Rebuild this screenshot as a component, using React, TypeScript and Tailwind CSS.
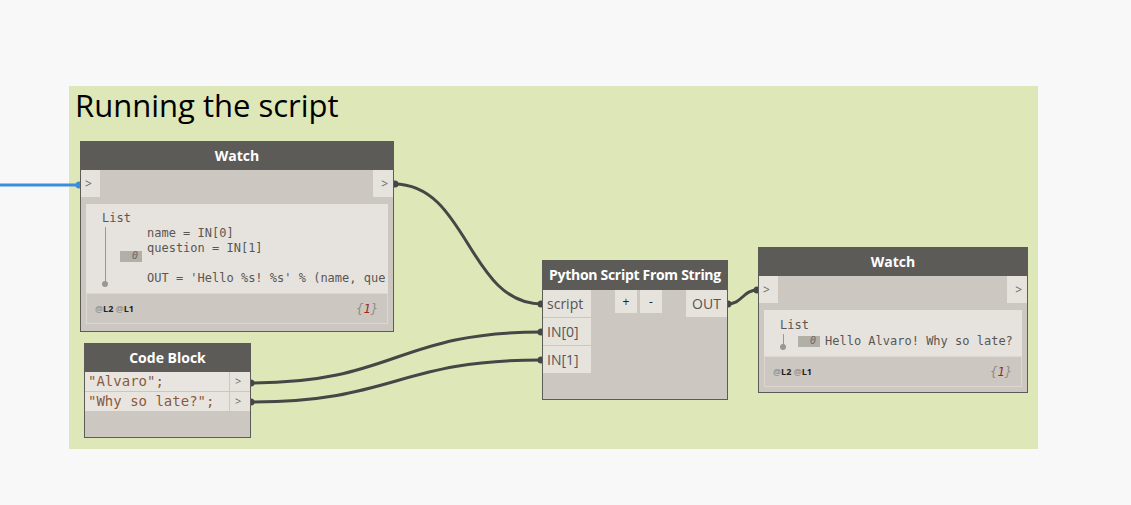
import React from "react";

const ui = { fontFamily: '"Open Sans", "Noto Sans", sans-serif' };
const mono = { fontFamily: '"DejaVu Sans Mono", "Liberation Mono", monospace' };

function wire(x1: number, y1: number, x2: number, y2: number) {
  const d = (x2 - x1) * 0.5;
  return `M ${x1} ${y1} C ${x1 + d} ${y1}, ${x2 - d} ${y2}, ${x2} ${y2}`;
}

function Wires() {
  const wires: [number, number, number, number][] = [
    [394, 184, 542, 304],
    [250, 383, 542, 332],
    [250, 402, 542, 360],
    [727, 304, 758, 290],
  ];
  return (
    <svg className="absolute left-0 top-0" width={1131} height={505} viewBox="0 0 1131 505">
      <line x1={0} y1={185} x2={78} y2={185} stroke="#3c8edb" strokeWidth={3} />
      <circle cx={79} cy={185} r={3.5} fill="#3c8edb" />
      {wires.map(([a, b, c, d], i) => (
        <g key={i}>
          <path d={wire(a, b, c, d)} stroke="#464646" strokeWidth={3} fill="none" />
          <circle cx={a + 1} cy={b} r={3.5} fill="#464646" />
          <circle cx={c - 1} cy={d} r={3.5} fill="#464646" />
        </g>
      ))}
    </svg>
  );
}

function Footer() {
  return (
    <div className="mx-[5px] h-[31px] border border-[#dcd8d1] flex items-center justify-between pl-[8px] pr-[9px]">
      <span className="text-[9px] font-bold text-[#222]" style={ui}>
        <span className="text-[#999]">@</span>L2 <span className="text-[#999]">@</span>L1
      </span>
      <span className="text-[12px] italic text-[#8d8a85]" style={mono}>
        {"{"}
        <span className="text-[#9b2a1d]">1</span>
        {"}"}
      </span>
    </div>
  );
}

function PortRow() {
  return (
    <div className="h-[27px] flex justify-between">
      <div className="w-[19px] bg-[#e6e3dd] flex items-center pl-[4px] text-[12px] text-[#666]" style={ui}>&gt;</div>
      <div className="w-[20px] bg-[#e6e3dd] flex items-center justify-end pr-[5px] text-[12px] text-[#666]" style={ui}>&gt;</div>
    </div>
  );
}

function Header({ title }: { title: string }) {
  return (
    <div className="h-[28px] pb-[2px] bg-[#5d5b58] flex items-center justify-center text-white font-bold text-[14px]" style={ui}>
      {title}
    </div>
  );
}

function TreeLine() {
  return (
    <div className="w-[34px] flex justify-start pl-[16px]">
      <div className="flex flex-col items-center">
        <div className="w-px flex-1 bg-[#9a9792] mt-[1px]" />
        <div className="w-[6px] h-[6px] rounded-full bg-[#9a9792] -mt-[3px] mb-[-1px]" />
      </div>
    </div>
  );
}

function IndexBox() {
  return (
    <div className="w-[22px] h-[11px] bg-[#b2aea8] flex items-center justify-end pr-[4px] text-[10px] italic text-[#6b6864] leading-none" style={mono}>
      0
    </div>
  );
}

function Watch1() {
  return (
    <div className="absolute left-[80px] top-[141px] w-[314px] h-[191px] border border-[#5d5b58] bg-[#ccc8c1] box-border flex flex-col">
      <Header title="Watch" />
      <PortRow />
      <div className="mt-[7px] mx-[5px] h-[89px] bg-[#e6e3de] pt-[7px] overflow-hidden">
        <div className="pl-[16px] h-[15px] leading-[15px] text-[12px] text-[#5a5752]" style={mono}>List</div>
        <div className="flex items-stretch">
          <TreeLine />
          <div className="flex items-center">
            <IndexBox />
          </div>
          <div className="ml-[5px] text-[12px] leading-[15px] text-[#5a5752] whitespace-pre" style={mono}>
            {"name = IN[0]\nquestion = IN[1]\n\nOUT = 'Hello %s! %s' % (name, que"}
          </div>
        </div>
      </div>
      <Footer />
    </div>
  );
}

function Watch2() {
  return (
    <div className="absolute left-[758px] top-[247px] w-[270px] h-[146px] border border-[#5d5b58] bg-[#ccc8c1] box-border flex flex-col">
      <Header title="Watch" />
      <PortRow />
      <div className="mt-[7px] mx-[5px] h-[46px] bg-[#e6e3de] pt-[8px] overflow-hidden">
        <div className="pl-[16px] h-[15px] leading-[15px] text-[12px] text-[#5a5752]" style={mono}>List</div>
        <div className="flex items-stretch">
          <TreeLine />
          <div className="flex items-center">
            <IndexBox />
          </div>
          <div className="ml-[5px] text-[12px] leading-[16px] text-[#5a5752] whitespace-pre" style={mono}>
            Hello Alvaro! Why so late?
          </div>
        </div>
      </div>
      <Footer />
    </div>
  );
}

function Python() {
  const port = "h-[27px] bg-[#e6e3dd] flex items-center text-[14px] text-[#555]";
  return (
    <div className="absolute left-[542px] top-[260px] w-[186px] h-[140px] border border-[#5d5b58] bg-[#ccc8c1] box-border flex flex-col">
      <div className="h-[29px] pb-[2px] bg-[#5d5b58] flex items-center justify-center text-white font-bold text-[14px] whitespace-nowrap tracking-[-0.3px]" style={ui}>
        Python Script From String
      </div>
      <div className="flex">
        <div className="w-[48px] flex flex-col gap-px" style={ui}>
          <div className={port + " pl-[4px]"}>script</div>
          <div className={port + " pl-[4px]"}>IN[0]</div>
          <div className={port + " pl-[4px]"}>IN[1]</div>
        </div>
        <div className="flex gap-[3px] ml-[24px] h-[23px]" style={ui}>
          <div className="w-[22px] bg-[#e6e3dd] flex items-center justify-center text-[12px] text-[#222]">+</div>
          <div className="w-[22px] bg-[#e6e3dd] flex items-center justify-center text-[12px] text-[#222]">-</div>
        </div>
        <div className="flex-1" />
        <div className={port + " w-[41px] justify-center"} style={ui}>OUT</div>
      </div>
    </div>
  );
}

function CodeBlock() {
  const row = "h-[19px] flex";
  return (
    <div className="absolute left-[84px] top-[343px] w-[167px] h-[95px] border border-[#5d5b58] bg-[#ccc8c1] box-border flex flex-col">
      <Header title="Code Block" />
      <div className="flex flex-col gap-px">
        <div className={row}>
          <div className="w-[144px] bg-[#e8e5e0] flex items-center pl-[3px] text-[14px] text-[#8a5a3c] whitespace-pre overflow-hidden" style={mono}>"Alvaro";</div>
          <div className="w-px" />
          <div className="flex-1 bg-[#e6e3dd] flex items-center pl-[5px] text-[11px] text-[#666]" style={ui}>&gt;</div>
        </div>
        <div className={row}>
          <div className="w-[144px] bg-[#e8e5e0] flex items-center pl-[3px] text-[14px] text-[#8a5a3c] whitespace-pre overflow-hidden" style={mono}>"Why so late?";</div>
          <div className="w-px" />
          <div className="flex-1 bg-[#e6e3dd] flex items-center pl-[5px] text-[11px] text-[#666]" style={ui}>&gt;</div>
        </div>
      </div>
    </div>
  );
}

export default function App() {
  return (
    <div className="relative w-[1131px] h-[505px] bg-[#f8f8f8] overflow-hidden">
      <div className="absolute left-[69px] top-[86px] w-[969px] h-[363px] bg-[#dde7b8]">
        <div className="pl-[6px] text-[31px] leading-[38px] text-black" style={ui}>
          Running the script
        </div>
      </div>
      <Wires />
      <Watch1 />
      <CodeBlock />
      <Python />
      <Watch2 />
    </div>
  );
}
